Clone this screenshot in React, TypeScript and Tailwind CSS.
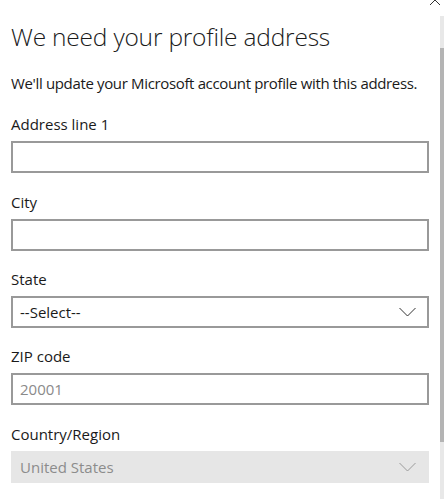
import React from 'react';

const Chevron = ({ color }: { color: string }) => (
  <svg width="17" height="10" viewBox="0 0 17 10" fill="none">
    <path d="M0.5 1L8.5 9L16.5 1" stroke={color} strokeWidth="1" />
  </svg>
);

interface FieldProps {
  label: string;
  top: string;
  children: React.ReactNode;
}

const Field = ({ label, top, children }: FieldProps) => (
  <div className={top}>
    <div className="text-[15px] leading-[20px] text-[#1a1a1a]">{label}</div>
    <div className="mt-[7px]">{children}</div>
  </div>
);

const App = () => {
  return (
    <div className="relative w-[444px] h-[499px] overflow-hidden bg-white font-['Open_Sans',sans-serif]">
      {/* close button, mostly cut off */}
      <svg className="absolute left-[429px] top-[-6px]" width="12" height="12" viewBox="0 0 12 12">
        <path d="M1 1L11 11M11 1L1 11" stroke="#333" strokeWidth="1" />
      </svg>

      {/* scrollbar */}
      <div className="absolute left-[440px] top-[16px] w-[4px] h-[483px] bg-[#e8e8e8]">
        <div className="mt-[32px] h-[394px] bg-[#b4b4b4]" />
      </div>

      <div className="pl-[11px] w-[429px] pt-[19px]">
        <h1 className="text-[24.5px] leading-[36px] font-light text-[#1a1a1a] tracking-[-0.2px]">
          We need your profile address
        </h1>
        <p className="mt-[18px] text-[15px] leading-[20px] text-[#1a1a1a] tracking-[-0.35px]">
          We'll update your Microsoft account profile with this address.
        </p>

        <Field label="Address line 1" top="mt-[21px]">
          <div className="h-[32px] border-2 border-[#999999] bg-white" />
        </Field>

        <Field label="City" top="mt-[19px]">
          <div className="h-[32px] border-2 border-[#999999] bg-white" />
        </Field>

        <Field label="State" top="mt-[18px]">
          <div className="h-[32px] border-2 border-[#999999] bg-white flex items-center justify-between pl-[7px] pr-[11px]">
            <span className="text-[15px] text-[#1a1a1a]">--Select--</span>
            <Chevron color="#333333" />
          </div>
        </Field>

        <Field label="ZIP code" top="mt-[18px]">
          <div className="h-[32px] border-2 border-[#999999] bg-white flex items-center pl-[7px]">
            <span className="text-[15px] text-[#8a8a8a]">20001</span>
          </div>
        </Field>

        <Field label="Country/Region" top="mt-[19px]">
          <div className="h-[32px] bg-[#e6e6e6] flex items-center justify-between pl-[9px] pr-[13px]">
            <span className="text-[15px] text-[#8c8c8c]">United States</span>
            <Chevron color="#9a9a9a" />
          </div>
        </Field>
      </div>
    </div>
  );
};

export default App;
